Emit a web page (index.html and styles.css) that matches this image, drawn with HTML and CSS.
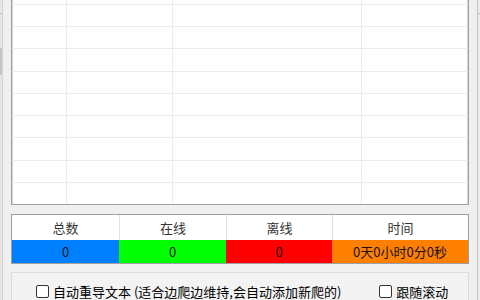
FILE: index.html
```html
<!DOCTYPE html>
<html lang="zh-CN">
<head>
  <meta charset="UTF-8">
  <meta name="viewport" content="width=device-width, initial-scale=1.0">
  <title>统计面板</title>
  <link rel="stylesheet" href="styles.css">
</head>
<body>
  <div class="frame">
    <div class="edge edge-left">
      <span class="edge-cap"></span>
      <span class="edge-thumb"></span>
    </div>

    <main class="panel">
      <!-- Liste (les premières lignes sont hors écran) -->
      <div class="list">
        <div class="row"><span></span><span></span><span></span><span></span></div>
        <div class="row"><span></span><span></span><span></span><span></span></div>
        <div class="row"><span></span><span></span><span></span><span></span></div>
        <div class="row"><span></span><span></span><span></span><span></span></div>
        <div class="row"><span></span><span></span><span></span><span></span></div>
        <div class="row"><span></span><span></span><span></span><span></span></div>
        <div class="row"><span></span><span></span><span></span><span></span></div>
        <div class="row"><span></span><span></span><span></span><span></span></div>
        <div class="row"><span></span><span></span><span></span><span></span></div>
        <div class="row"><span></span><span></span><span></span><span></span></div>
      </div>

      <div class="stats">
        <div class="stats-head">总数</div>
        <div class="stats-head">在线</div>
        <div class="stats-head">离线</div>
        <div class="stats-head">时间</div>
        <div class="stats-val total">0</div>
        <div class="stats-val online">0</div>
        <div class="stats-val offline">0</div>
        <div class="stats-val time">0天0小时0分0秒</div>
      </div>

      <div class="options">
        <label class="check"><span class="box"></span>自动重导文本 (适合边爬边维持,会自动添加新爬的)</label>
        <label class="check"><span class="box"></span>跟随滚动</label>
      </div>
    </main>

    <div class="edge edge-right">
      <span class="edge-cap"></span>
    </div>
  </div>
</body>
</html>
```

FILE: styles.css
```css
html, body {
  margin: 0;
  height: 100%;
  overflow: hidden;
}
body {
  font-family: "Noto Sans CJK SC", "Noto Sans", sans-serif;
  font-size: 13px;
  color: #000;
  background-color: #f0f0f0;
}
.frame {
  display: flex;
  height: 300px;
}
/* Bords de la fenêtre parente */
.edge {
  width: 2px;
  display: flex;
  flex-direction: column;
  background-color: #e6e6e6;
}
.edge-left {
  border-right: 1px solid #d2d2d2;
}
.edge-right {
  border-left: 1px solid #c4c4c4;
  background-color: #ececec;
}
.edge-cap {
  height: 13px;
  border-bottom: 1px solid #bdbdbd;
}
.edge-thumb {
  margin-top: 34px;
  height: 27px;
  background-color: #c6c6c6;
}
.panel {
  flex: 1;
  padding: 0 8px;
  display: flex;
  flex-direction: column;
}
/* Liste */
.list {
  height: 212px;
  display: flex;
  flex-direction: column;
  justify-content: flex-end;
  overflow: hidden;
  background-color: #fff;
  border-left: 1px solid #a0a0a0;
  border-right: 1px solid #a0a0a0;
  box-shadow: inset 1px 0 0 #d6d6d6, inset -1px 0 0 #d6d6d6;
}
.row {
  flex: none;
  height: 22.25px;
  box-sizing: border-box;
  display: grid;
  grid-template-columns: 54px 106px 189px 1fr;
  border-bottom: 1px solid #ececec;
}
.row:last-child {
  border-bottom-color: #a0a0a0;
}
.row span + span {
  border-left: 1px solid #ececec;
}
/* Tableau de statistiques */
.stats {
  margin-top: 9px;
  display: grid;
  grid-template-columns: 107px 107px 106px 1fr;
  grid-template-rows: 25px 23px;
  border: 1px solid #a0a0a0;
  background-color: #fff;
}
.stats-head,
.stats-val {
  display: flex;
  justify-content: center;
  align-items: center;
  line-height: 1;
}
.stats-head {
  color: #333;
}
.stats-head + .stats-head {
  border-left: 1px solid #e0e0e0;
}
.stats-val {
  color: #111;
}
.total { background-color: #0080ff; }
.online { background-color: #00ff00; }
.offline { background-color: #ff0000; }
.time { background-color: #ff8000; }
/* Options */
.options {
  margin-top: 8px;
  flex: 1;
  display: flex;
  gap: 38px;
  padding: 10px 0 0 24px;
  border: 1px solid #dcdcdc;
  border-bottom: none;
  background-color: #f3f3f3;
}
.check {
  display: flex;
  align-items: flex-start;
  gap: 4px;
  line-height: 17px;
  white-space: nowrap;
}
.box {
  width: 11px;
  height: 11px;
  margin-top: 2px;
  border: 1px solid #333;
  border-radius: 2px;
  background-color: #fff;
}
```
